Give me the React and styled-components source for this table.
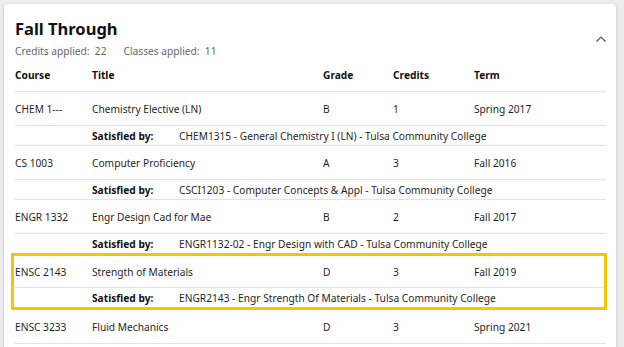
import React from 'react';
import styled, { createGlobalStyle } from 'styled-components';

const GlobalStyle = createGlobalStyle`
    html, body {
        margin: 0;
        padding: 0;
        background: #ededed;
        font-family: "Noto Sans", "Open Sans", sans-serif;
        color: #1f1f1f;
    }
`

const courses = [
    {
        course: 'CHEM 1---',
        title: 'Chemistry Elective (LN)',
        grade: 'B',
        credits: '1',
        term: 'Spring 2017',
        satisfiedBy: 'CHEM1315 - General Chemistry I (LN) - Tulsa Community College'
    },
    {
        course: 'CS 1003',
        title: 'Computer Proficiency',
        grade: 'A',
        credits: '3',
        term: 'Fall 2016',
        satisfiedBy: 'CSCI1203 - Computer Concepts & Appl - Tulsa Community College'
    },
    {
        course: 'ENGR 1332',
        title: 'Engr Design Cad for Mae',
        grade: 'B',
        credits: '2',
        term: 'Fall 2017',
        satisfiedBy: 'ENGR1132-02 - Engr Design with CAD - Tulsa Community College'
    },
    {
        course: 'ENSC 2143',
        title: 'Strength of Materials',
        grade: 'D',
        credits: '3',
        term: 'Fall 2019',
        satisfiedBy: 'ENGR2143 - Engr Strength Of Materials - Tulsa Community College',
        highlighted: true
    },
    {
        course: 'ENSC 3233',
        title: 'Fluid Mechanics',
        grade: 'D',
        credits: '3',
        term: 'Spring 2021'
    }
];

const ChevronUp = () => (
    <svg width="12" height="8" viewBox="0 0 12 8">
        <polyline points="1.5,6.5 6,2 10.5,6.5" fill="none" stroke="#555" strokeWidth="1.2" />
    </svg>
);

const CourseEntry = ({ item }) => (
    <CourseGroup $highlighted={item.highlighted}>
        <Row $tight={item.highlighted}>
            <Cell>{item.course}</Cell>
            <Cell>{item.title}</Cell>
            <Cell>{item.grade}</Cell>
            <Cell>{item.credits}</Cell>
            <Cell>{item.term}</Cell>
        </Row>
        {item.satisfiedBy && (
            <SatisfiedRow $last={item.highlighted}>
                <span />
                <SatisfiedLabel>Satisfied by:</SatisfiedLabel>
                <Cell>{item.satisfiedBy}</Cell>
            </SatisfiedRow>
        )}
    </CourseGroup>
);

export default () => {
    return (
        <>
            <GlobalStyle />
            <Card>
                <Header>
                    <div>
                        <Title>Fall Through</Title>
                        <Meta>
                            <span>Credits applied:&nbsp; 22</span>
                            <span>Classes applied:&nbsp; 11</span>
                        </Meta>
                    </div>
                    <Toggle>
                        <ChevronUp />
                    </Toggle>
                </Header>

                <HeadRow>
                    <span>Course</span>
                    <span>Title</span>
                    <span>Grade</span>
                    <span>Credits</span>
                    <span>Term</span>
                </HeadRow>

                {courses.map(item => (
                    <CourseEntry key={item.course} item={item} />
                ))}
            </Card>
        </>
    );
}

const Card = styled.div`
    width: 591px;
    margin: 4px 0 0 4px;
    padding: 13px 10px 40px 11px;
    background: #fff;
    border-radius: 4px;
    box-shadow: 0 1px 3px rgba(0, 0, 0, 0.22);
`
const Header = styled.div`
    display: flex;
    justify-content: space-between;
    align-items: flex-start;
`
const Title = styled.h2`
    margin: 0;
    font-size: 16.5px;
    line-height: 24px;
    font-weight: 700;
    color: #111;
`
const Meta = styled.div`
    display: flex;
    gap: 17px;
    margin-top: 2px;
    font-size: 10.2px;
    line-height: 16px;
    color: #666;
`
const Toggle = styled.div`
    padding-top: 9px;
    margin-right: -1px;
`
const columns = `77px 231px 70px 81px 1fr`

const HeadRow = styled.div`
    display: grid;
    grid-template-columns: ${columns};
    align-items: center;
    height: 32px;
    border-bottom: 1px solid #e2e2e2;
    font-size: 10.2px;
    font-weight: 700;
    color: #111;
`
const CourseGroup = styled.div`
    margin: ${p => p.$highlighted ? '-1px -1px 0 -4px' : '0'};
    padding-left: ${p => p.$highlighted ? '1px' : '0'};
    border: ${p => p.$highlighted ? '3px solid #f8c300' : 'none'};
`
const Row = styled.div`
    display: grid;
    grid-template-columns: ${columns};
    align-items: center;
    height: ${p => p.$tight ? '31px' : '33px'};
    border-bottom: 1px solid #e2e2e2;
    font-size: 10.2px;
`
const SatisfiedRow = styled.div`
    display: grid;
    grid-template-columns: 77px 87px 1fr;
    align-items: center;
    height: 19px;
    border-bottom: ${p => p.$last ? 'none' : '1px solid #e2e2e2'};
    font-size: 10.2px;
`
const Cell = styled.span`
    white-space: nowrap;
`
const SatisfiedLabel = styled.span`
    font-weight: 700;
    color: #111;
`
